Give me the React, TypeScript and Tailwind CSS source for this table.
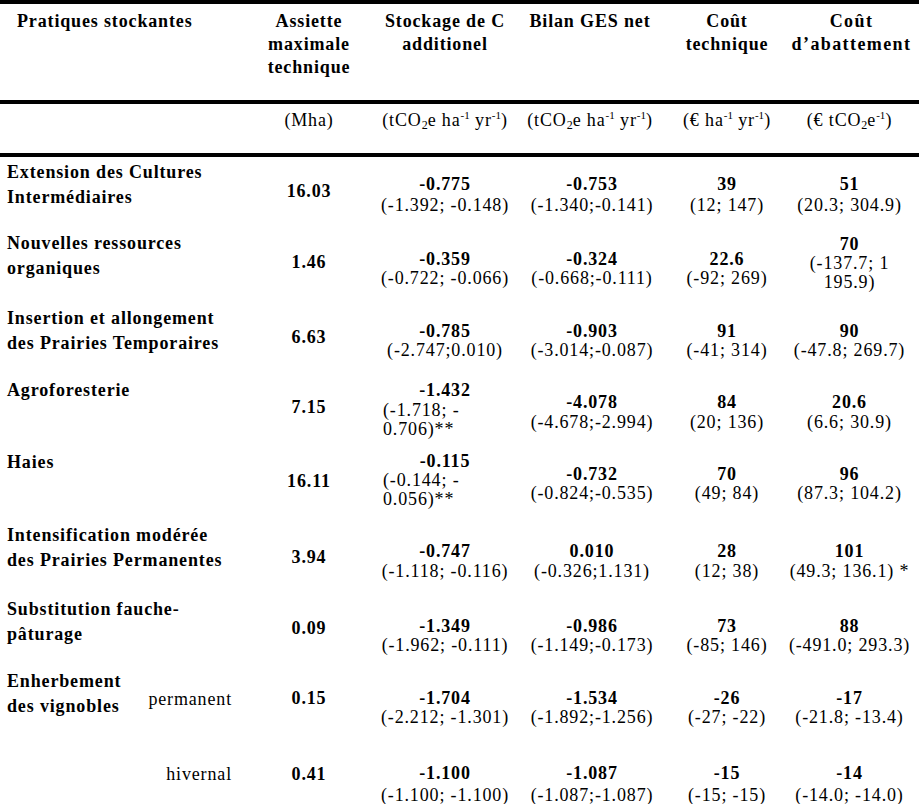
import React from "react";

type V = string[] | { l: string[]; c: string; left?: boolean };

type Row = {
  h: string;
  label: React.ReactNode;
  a: string;
  aPt: string;
  vCls: string;
  v: V[];
};

const colW = ["w-[238px]", "w-[142px]", "w-[130px]", "w-[164px]", "w-[106px]", "w-[139px]"];

const rows: Row[] = [
  {
    h: "h-[69px]",
    label: (
      <div className="pl-[7px] font-bold leading-[25px]">
        Extension des Cultures
        <br />
        Intermédiaires
      </div>
    ),
    a: "16.03",
    aPt: "pt-[21px]",
    vCls: "pt-[14px] leading-[21px]",
    v: [
      ["-0.775", "(-1.392; -0.148)"],
      ["-0.753", "(-1.340;-0.141)"],
      ["39", "(12; 147)"],
      ["51", "(20.3; 304.9)"],
    ],
  },
  {
    h: "h-[77px]",
    label: (
      <div className="pl-[7px] pt-[2px] font-bold leading-[25px]">
        Nouvelles ressources
        <br />
        organiques
      </div>
    ),
    a: "1.46",
    aPt: "pt-[23px]",
    vCls: "pt-[21px] leading-[18.5px]",
    v: [
      ["-0.359", "(-0.722; -0.066)"],
      ["-0.324", "(-0.668;-0.111)"],
      ["22.6", "(-92; 269)"],
      { l: ["70", "(-137.7; 1", "195.9)"], c: "pt-[6px] leading-[19px]" },
    ],
  },
  {
    h: "h-[72px]",
    label: (
      <div className="pl-[7px] font-bold leading-[25px]">
        Insertion et allongement
        <br />
        des Prairies Temporaires
      </div>
    ),
    a: "6.63",
    aPt: "pt-[21px]",
    vCls: "pt-[16px] leading-[19px]",
    v: [
      ["-0.785", "(-2.747;0.010)"],
      ["-0.903", "(-3.014;-0.087)"],
      ["91", "(-41; 314)"],
      ["90", "(-47.8; 269.7)"],
    ],
  },
  {
    h: "h-[72px]",
    label: <div className="pl-[7px] font-bold leading-[25px]">Agroforesterie</div>,
    a: "7.15",
    aPt: "pt-[19px]",
    vCls: "pt-[14px] leading-[20px]",
    v: [
      { l: ["-1.432", "(-1.718; -", "0.706)**"], c: "pt-[3px] leading-[19.5px]", left: true },
      ["-4.078", "(-4.678;-2.994)"],
      ["84", "(20; 136)"],
      ["20.6", "(6.6; 30.9)"],
    ],
  },
  {
    h: "h-[73px]",
    label: <div className="pl-[7px] font-bold leading-[25px]">Haies</div>,
    a: "16.11",
    aPt: "pt-[21px]",
    vCls: "pt-[15px] leading-[18.5px]",
    v: [
      { l: ["-0.115", "(-0.144; -", "0.056)**"], c: "pt-[2px] leading-[19px]", left: true },
      ["-0.732", "(-0.824;-0.535)"],
      ["70", "(49; 84)"],
      ["96", "(87.3; 104.2)"],
    ],
  },
  {
    h: "h-[73px]",
    label: (
      <div className="pl-[7px] font-bold leading-[25px]">
        Intensification modérée
        <br />
        des Prairies Permanentes
      </div>
    ),
    a: "3.94",
    aPt: "pt-[24px]",
    vCls: "pt-[18px] leading-[20px]",
    v: [
      ["-0.747", "(-1.118; -0.116)"],
      ["0.010", "(-0.326;1.131)"],
      ["28", "(12; 38)"],
      ["101", "(49.3; 136.1) *"],
    ],
  },
  {
    h: "h-[73px]",
    label: (
      <div className="pl-[7px] pt-[1px] font-bold leading-[25px]">
        Substitution fauche-
        <br />
        pâturage
      </div>
    ),
    a: "0.09",
    aPt: "pt-[22px]",
    vCls: "pt-[21px] leading-[19px]",
    v: [
      ["-1.349", "(-1.962; -0.111)"],
      ["-0.986", "(-1.149;-0.173)"],
      ["73", "(-85; 146)"],
      ["88", "(-491.0; 293.3)"],
    ],
  },
  {
    h: "h-[76px]",
    label: (
      <div className="flex justify-between pr-[6px]">
        <div className="pl-[7px] font-bold leading-[25px]">
          Enherbement
          <br />
          des vignobles
        </div>
        <div className="pt-[20px] leading-[20px]">permanent</div>
      </div>
    ),
    a: "0.15",
    aPt: "pt-[19px]",
    vCls: "pt-[20px] leading-[19px]",
    v: [
      ["-1.704", "(-2.212; -1.301)"],
      ["-1.534", "(-1.892;-1.256)"],
      ["-26", "(-27; -22)"],
      ["-17", "(-21.8; -13.4)"],
    ],
  },
  {
    h: "h-[59px]",
    label: (
      <div className="flex justify-end pr-[6px]">
        <div className="pt-[19px] leading-[20px]">hivernal</div>
      </div>
    ),
    a: "0.41",
    aPt: "pt-[19px]",
    vCls: "pt-[17px] leading-[22px]",
    v: [
      ["-1.100", "(-1.100; -1.100)"],
      ["-1.087", "(-1.087;-1.087)"],
      ["-15", "(-15; -15)"],
      ["-14", "(-14.0; -14.0)"],
    ],
  },
];

function ValueCell({ v, vCls, w }: { v: V; vCls: string; w: string }) {
  if (Array.isArray(v)) {
    return (
      <div className={`${w} flex justify-center ${vCls}`}>
        <div className="text-center whitespace-nowrap">
          <div className="font-bold">{v[0]}</div>
          {v.slice(1).map((t, i) => (
            <div key={i}>{t}</div>
          ))}
        </div>
      </div>
    );
  }
  if (v.left) {
    return (
      <div className={`${w} ${v.c}`}>
        <div className="font-bold text-center">{v.l[0]}</div>
        {v.l.slice(1).map((t, i) => (
          <div key={i} className="pl-[3px] whitespace-nowrap">
            {t}
          </div>
        ))}
      </div>
    );
  }
  return (
    <div className={`${w} flex justify-center ${v.c}`}>
      <div className="text-center whitespace-nowrap">
        <div className="font-bold">{v.l[0]}</div>
        {v.l.slice(1).map((t, i) => (
          <div key={i}>{t}</div>
        ))}
      </div>
    </div>
  );
}

const Sup = ({ children }: { children: React.ReactNode }) => (
  <span className="relative top-[-7px] text-[11px] tracking-normal">{children}</span>
);
const Sub = ({ children }: { children: React.ReactNode }) => (
  <span className="relative top-[3px] text-[12px] tracking-normal">{children}</span>
);

export default function App() {
  return (
    <div className="w-[919px] h-[804px] overflow-hidden bg-white text-black [font-family:'Liberation_Serif','Times_New_Roman',serif] text-[18px] tracking-[0.85px]">
      <div className="h-[4px] bg-black" />
      {/* header */}
      <div className="flex h-[96px] pt-[6px] font-bold leading-[23px] whitespace-nowrap">
        <div className={`${colW[0]} pl-[17px]`}>Pratiques stockantes</div>
        <div className={`${colW[1]} flex justify-center`}>
          <div className="text-center">
            Assiette
            <br />
            maximale
            <br />
            technique
          </div>
        </div>
        <div className={`${colW[2]} flex justify-center`}>
          <div className="text-center">
            Stockage de C
            <br />
            additionel
          </div>
        </div>
        <div className={`${colW[3]} flex justify-center pr-[4px]`}>
          <div className="text-center">Bilan GES net</div>
        </div>
        <div className={`${colW[4]} flex justify-center`}>
          <div className="text-center">
            Coût
            <br />
            technique
          </div>
        </div>
        <div className={`${colW[5]} flex justify-center pl-[4px]`}>
          <div className="text-center tracking-[1.4px]">
            Coût
            <br />
            d’abattement
          </div>
        </div>
      </div>
      <div className="h-[4px] bg-black" />
      {/* units */}
      <div className="flex h-[49px] pt-[5px] leading-[22px] whitespace-nowrap">
        <div className={colW[0]} />
        <div className={`${colW[1]} flex justify-center`}>(Mha)</div>
        <div className={`${colW[2]} flex justify-center`}>
          <span>
            (tCO<Sub>2</Sub>e ha<Sup>-1</Sup> yr<Sup>-1</Sup>)
          </span>
        </div>
        <div className={`${colW[3]} flex justify-center pr-[4px]`}>
          <span>
            (tCO<Sub>2</Sub>e ha<Sup>-1</Sup> yr<Sup>-1</Sup>)
          </span>
        </div>
        <div className={`${colW[4]} flex justify-center`}>
          <span>
            (€ ha<Sup>-1</Sup> yr<Sup>-1</Sup>)
          </span>
        </div>
        <div className={`${colW[5]} flex justify-center`}>
          <span>
            (€ tCO<Sub>2</Sub>e<Sup>-1</Sup>)
          </span>
        </div>
      </div>
      <div className="h-[4px] bg-black" />
      {/* data */}
      <div className="pt-[3px]">
        {rows.map((r, i) => (
          <div key={i} className={`flex ${r.h} whitespace-nowrap`}>
            <div className={colW[0]}>{r.label}</div>
            <div className={`${colW[1]} flex justify-center ${r.aPt} font-bold leading-[20px]`}>{r.a}</div>
            {r.v.map((v, j) => (
              <ValueCell key={j} v={v} vCls={r.vCls} w={colW[j + 2]} />
            ))}
          </div>
        ))}
      </div>
    </div>
  );
}
